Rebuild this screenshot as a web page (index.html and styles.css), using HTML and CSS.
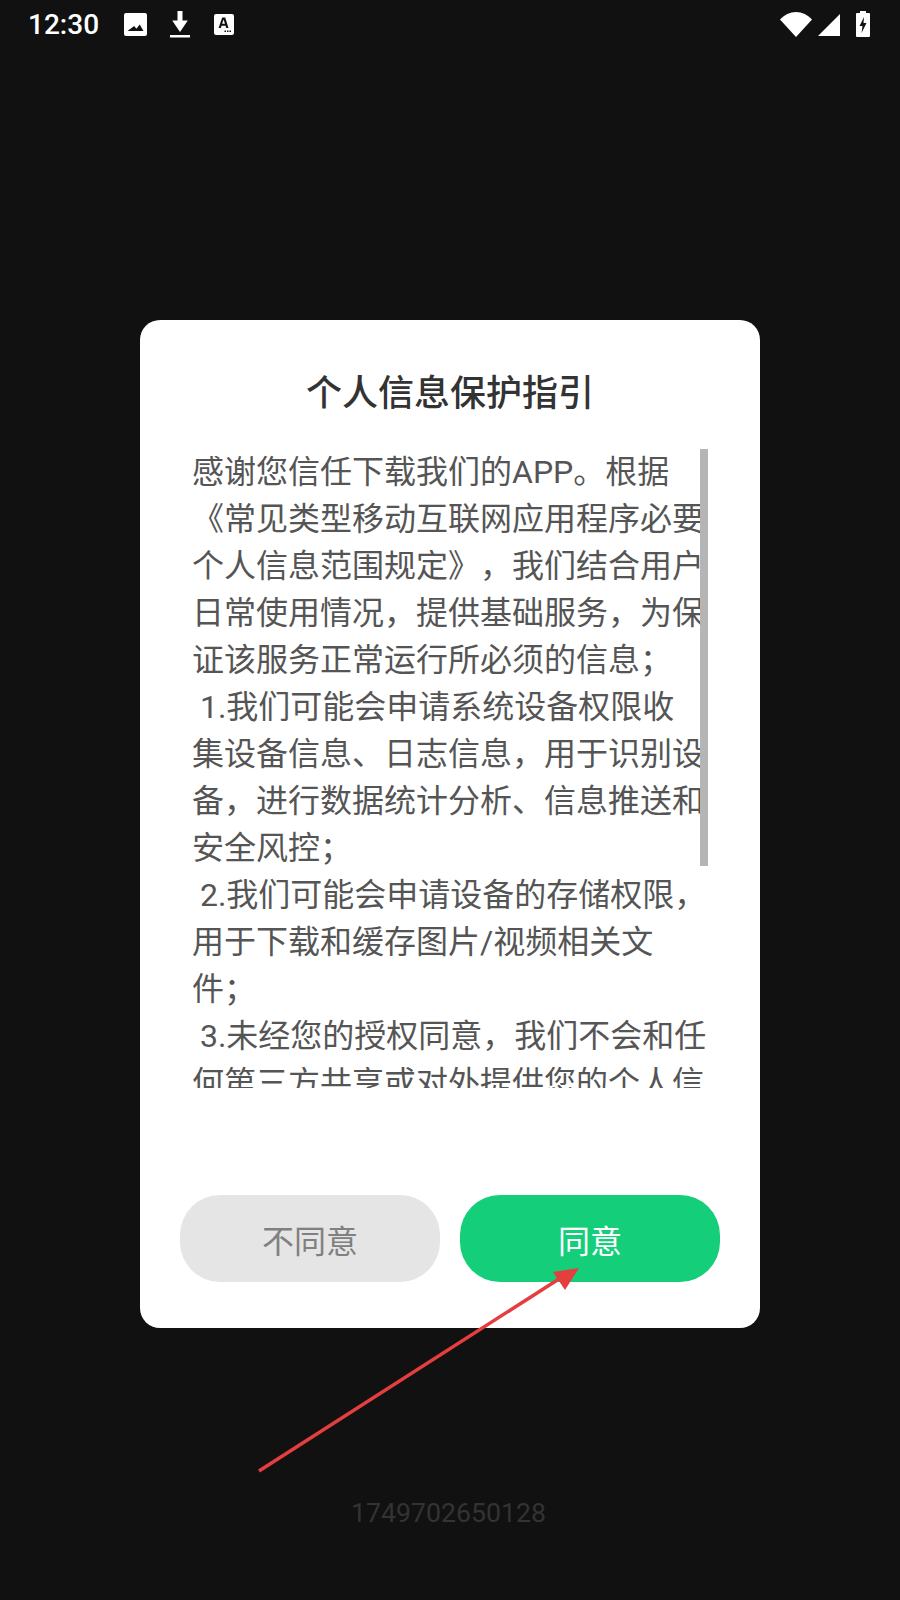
FILE: index.html
```html
<!DOCTYPE html>
<html lang="zh-CN">
<head>
<meta charset="utf-8">
<title>个人信息保护指引</title>
<link rel="stylesheet" href="styles.css">
</head>
<body>
<div class="screen">
  <header class="status">
    <div class="status-left">
      <span class="time">12:30</span>
      <svg class="ic ic-image" viewBox="0 0 23 23"><path fill="#fff" fill-rule="evenodd" d="M2 0h19a2 2 0 0 1 2 2v19a2 2 0 0 1-2 2H2a2 2 0 0 1-2-2V2a2 2 0 0 1 2-2zM3.500 18h16l-3.800-6.500-3.300 4.300-2.200-2.700z"/></svg>
      <svg class="ic ic-download" viewBox="0 0 20 27"><path fill="#fff" d="M7.500 0h5v9.500h5.300L10 21 2.200 9.500h5.300zM0 24h20v2.500H0z"/></svg>
      <svg class="ic ic-note" viewBox="0 0 20 21"><path fill="#fff" fill-rule="evenodd" d="M2 0h16a2 2 0 0 1 2 2v17a2 2 0 0 1-2 2H2a2 2 0 0 1-2-2V2a2 2 0 0 1 2-2zM8.200 3.500 4.600 14h2.200l.7-2.300h4.100l.7 2.300h2.200L11.200 3.500zM8.100 9.800l1.500-4.400 1.400 4.400zM10.500 16.500v1.500h1.500v-1.500zM13 16.500v1.500h1.500v-1.500zM15.500 16.500v1.500H17v-1.500z"/></svg>
    </div>
    <div class="status-right">
      <svg class="ic ic-wifi" viewBox="0 0 32 25"><path fill="#fff" d="M0 7.500C4 3 10 0 16 0s12 3 16 7.500L16 25z"/></svg>
      <svg class="ic ic-signal" viewBox="0 0 22 22"><path fill="#fff" d="M22 0v22H0z"/></svg>
      <svg class="ic ic-battery" viewBox="0 0 14 26"><path fill="#fff" fill-rule="evenodd" d="M4 0h6v2h3a1 1 0 0 1 1 1v22a1 1 0 0 1-1 1H1a1 1 0 0 1-1-1V3a1 1 0 0 1 1-1h3zM8 6 3.500 15H6.500L5.500 22 10.500 12H7.500z"/></svg>
    </div>
  </header>

  <main class="dialog">
    <h1 class="title">个人信息保护指引</h1>
    <div class="scroll">
      <p class="body-text">感谢您信任下载我们的APP。根据《常见类型移动互联网应用程序必要个人信息范围规定》，我们结合用户日常使用情况，提供基础服务，为保证该服务正常运行所必须的信息；
 1.我们可能会申请系统设备权限收<br>集设备信息、日志信息，用于识别设备，进行数据统计分析、信息推送和安全风控；
 2.我们可能会申请设备的存储权限，用于下载和缓存图片/视频相关文件；
 3.未经您的授权同意，我们不会和任何第三方共享或对外提供您的个人信息。</p>
      <div class="scrollbar"></div>
    </div>
    <div class="actions">
      <button class="btn btn-decline">不同意</button>
      <button class="btn btn-accept">同意</button>
    </div>
  </main>

  <footer class="stamp">1749702650128</footer>

  <svg class="arrow" viewBox="0 0 900 1600">
    <line x1="259" y1="1471" x2="562" y2="1277" stroke="#e53e3e" stroke-width="3.500"/>
    <polygon points="579,1268 553,1272 565,1290" fill="#e53e3e"/>
  </svg>
</div>
</body>
</html>
```

FILE: styles.css
```css
* { box-sizing: border-box; }
html, body { margin: 0; padding: 0; }
body {
  background: #111111;
  font-family: Roboto, "Noto Sans CJK SC", sans-serif;
}
.screen {
  position: relative;
  width: 900px;
  height: 1600px;
  overflow: hidden;
  display: flex;
  flex-direction: column;
  align-items: center;
}
.status {
  width: 100%;
  height: 48px;
  display: flex;
  justify-content: space-between;
  align-items: center;
  flex: none;
}
.status-left, .status-right { display: flex; align-items: center; }
.status-left { padding-left: 28px; }
.status-right { padding-right: 30px; }
.time { color: #fff; font-size: 28px; font-weight: 500; width: 96px; }
.ic { display: block; flex: none; }
.ic-image { width: 23px; height: 23px; }
.ic-download { width: 20px; height: 27px; margin-left: 23px; }
.ic-note { width: 20px; height: 21px; margin-left: 24px; }
.ic-wifi { width: 32px; height: 25px; }
.ic-signal { width: 22px; height: 22px; margin-left: 6px; margin-top: 2px; }
.ic-battery { width: 14px; height: 26px; margin-left: 16px; }

.dialog {
  width: 620px;
  height: 1008px;
  margin-top: 272px;
  background: #fff;
  border-radius: 20px;
  flex: none;
  display: flex;
  flex-direction: column;
  align-items: center;
}
.title {
  margin: 42px 0 0;
  height: 56px;
  line-height: 56px;
  font-size: 36px;
  font-weight: 500;
  color: #333;
  font-family: "Noto Sans CJK SC", sans-serif;
  text-align: center;
}
.scroll {
  position: relative;
  width: 516px;
  height: 639px;
  margin-top: 31px;
  overflow: hidden;
}
.body-text {
  margin: 0;
  font-size: 32px;
  line-height: 47px;
  color: #555;
  white-space: pre-wrap;
  text-spacing-trim: space-all;
  font-family: Roboto, "Noto Sans CJK SC", sans-serif;
}
.scrollbar {
  position: absolute;
  top: 0;
  right: 0;
  width: 8px;
  height: 417px;
  background: #b5b5b5;
}
.actions {
  width: 100%;
  display: flex;
  gap: 20px;
  padding: 0 40px;
  margin-top: 107px;
}
.btn {
  flex: 1;
  height: 87px;
  border: 0;
  border-radius: 40px;
  font-size: 32px;
  font-family: "Noto Sans CJK SC", sans-serif;
  padding: 0;
}
.btn-decline { background: #e5e5e5; color: #808080; }
.btn-accept { background: #15ce7a; color: #fff; }
.stamp {
  margin-top: 167px;
  margin-right: 3px;
  font-size: 26.7px;
  line-height: 36px;
  color: #333;
}
.arrow {
  position: absolute;
  top: 0;
  left: 0;
  width: 900px;
  height: 1600px;
  pointer-events: none;
}
```
